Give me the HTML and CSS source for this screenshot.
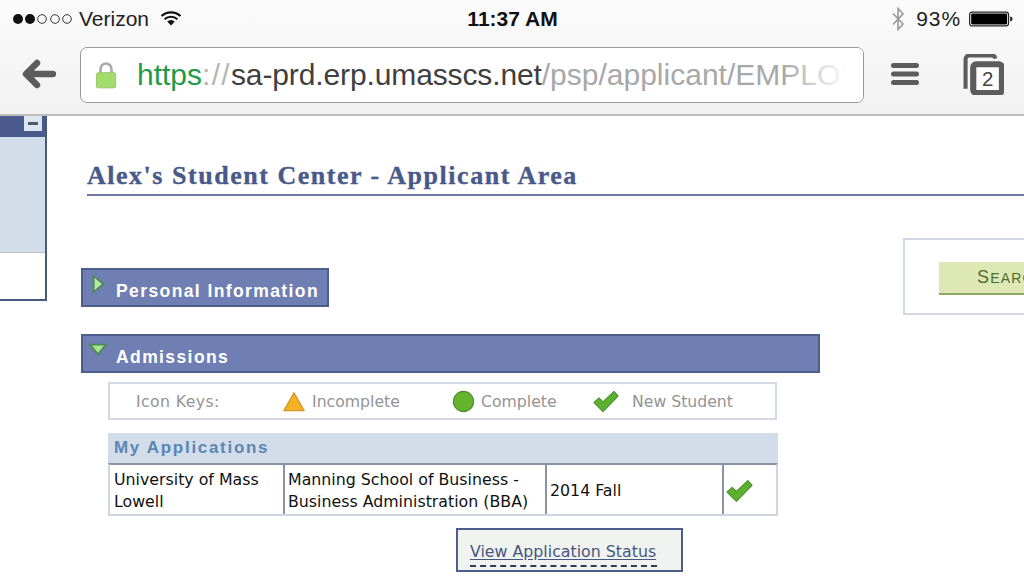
FILE: index.html
```html
<!DOCTYPE html>
<html lang="en">
<head>
<meta charset="utf-8">
<title>Alex's Student Center</title>
<link rel="stylesheet" href="styles.css">
</head>
<body>
<div class="page">
  <header class="chrome">
    <div class="status">
      <div class="status-left">
        <svg class="signal" viewBox="0 0 62 12"><circle cx="6" cy="6" r="5" fill="#111"/><circle cx="18" cy="6" r="5" fill="#111"/><circle cx="30" cy="6" r="4.3" fill="none" stroke="#333" stroke-width="1"/><circle cx="43" cy="6" r="4.3" fill="none" stroke="#333" stroke-width="1"/><circle cx="55" cy="6" r="4.3" fill="none" stroke="#333" stroke-width="1"/></svg>
        <span class="carrier">Verizon</span>
        <svg class="wifi" viewBox="0 0 22 16"><path d="M1.500 6a14 14 0 0 1 19 0M4.600 9.200a9.600 9.600 0 0 1 12.800 0" fill="none" stroke="#111" stroke-width="2.200"/><path d="M7.200 11.600a5.500 5.500 0 0 1 7.600 0L11 15.600z" fill="#111"/></svg>
      </div>
      <div class="clock">11:37 AM</div>
      <div class="status-right">
        <svg class="bt" viewBox="0 0 14 24"><path d="M2 6.500l10 10.500-5 5.500V1.500l5 5.500L2 17.500" fill="none" stroke="#999" stroke-width="1.600"/></svg>
        <span class="pct">93%</span>
        <svg class="batt" viewBox="0 0 46 16"><rect x=".7" y=".7" width="40.600" height="14.600" rx="2.500" fill="#fff" stroke="#222" stroke-width="1.300"/><rect x="2.300" y="2.300" width="37.500" height="11.400" rx="1.200" fill="#000"/><path d="M43 5.500c1.800.4 2.500 1.300 2.500 2.500s-.7 2.100-2.500 2.500z" fill="#222"/></svg>
      </div>
    </div>
    <div class="nav">
      <svg class="back" viewBox="0 0 34 30"><path d="M15 4 4 15l11 11M5 15h26" fill="none" stroke="#5c5c5c" stroke-width="6.500" stroke-linecap="round" stroke-linejoin="round"/></svg>
      <div class="url">
        <svg class="lock" viewBox="0 0 24 30"><path d="M6 14V8.500a6 6 0 0 1 12 0V14" fill="none" stroke="#a9a9a9" stroke-width="2.800"/><rect x="1.500" y="12.500" width="21" height="16.500" rx="2" class="lock-body"/></svg>
        <span class="url-text"><span class="u-green">https</span><span class="u-grey">://</span><span class="u-dark">sa-prd.erp.umasscs.net</span><span class="u-light">/psp/applicant/EMPLOY</span></span>
      </div>
      <svg class="menu" viewBox="0 0 28 24"><path d="M2.500 3.500h23M2.500 12h23M2.500 20.500h23" fill="none" stroke="#5c5c5c" stroke-width="5" stroke-linecap="round"/></svg>
      <svg class="tabs" viewBox="0 0 40 40"><path d="M2.500 34V5a3.500 3.500 0 0 1 3.500-3.500h22a3.500 3.500 0 0 1 3.500 3" fill="none" stroke="#5c5c5c" stroke-width="4"/><rect x="10" y="10" width="28" height="28" rx="3" fill="#fff" stroke="#5c5c5c" stroke-width="6"/><text x="24" y="31" class="tabs-num">2</text></svg>
    </div>
  </header>

  <main class="content">
    <aside class="side">
      <div class="side-head"><span class="side-btn"></span></div>
      <div class="side-pale"></div>
      <div class="side-white"></div>
    </aside>
    <div class="main">
      <h1 class="title">Alex's Student Center - Applicant Area</h1>
      <div class="lower">
        <div class="left">
          <div class="bar bar-short">
            <svg class="arrow-r" viewBox="0 0 12 18"><path d="M1.500 1.500 10.500 9l-9 7.500z" fill="#b4e8a0" stroke="#4e8a5a" stroke-width="1.800"/></svg>
            <span class="bar-label">Personal Information</span>
          </div>
          <div class="bar bar-long">
            <svg class="arrow-d" viewBox="0 0 18 12"><path d="M1.500 1.500h15L9 10.500z" fill="#a5e38f" stroke="#4e8a5a" stroke-width="1.800"/></svg>
            <span class="bar-label">Admissions</span>
          </div>
          <div class="indent">
            <div class="keys">
              <span class="key-title">Icon Keys:</span>
              <span class="key key-inc">
                <svg class="i-tri" viewBox="0 0 24 22"><path d="M12 1.500 23 21H1z" fill="#f5b324" stroke="#d8962a" stroke-width="1.500" stroke-linejoin="round"/></svg>Incomplete</span>
              <span class="key key-com">
                <svg class="i-circ" viewBox="0 0 24 24"><circle cx="12" cy="12" r="10.500" fill="#66b32e" stroke="#4b8f2a" stroke-width="1.200"/></svg>Complete</span>
              <span class="key key-new">
                <svg class="i-check" viewBox="0 0 26 22"><path d="M1 12l5-4.500 4 4L21 1l4 4.500L10 21z" fill="#5fb030" stroke="#4a9a30" stroke-width="1.200" stroke-linejoin="round"/></svg>New Student</span>
            </div>
            <div class="apps-head">My Applications</div>
            <div class="apps-row">
              <div class="cell cell-a">University of Mass<br>Lowell</div>
              <div class="cell cell-b">Manning School of Business -<br>Business Administration (BBA)</div>
              <div class="cell cell-c">2014 Fall</div>
              <div class="cell cell-d"><svg class="i-check" viewBox="0 0 26 22"><path d="M1 12l5-4.500 4 4L21 1l4 4.500L10 21z" fill="#5fb030" stroke="#4a9a30" stroke-width="1.200" stroke-linejoin="round"/></svg></div>
            </div>
            <div class="status-btn-row"><a class="status-btn" href="#">View Application Status</a></div>
          </div>
        </div>
        <div class="panel"><div class="search-btn"><span class="sc-big">S</span>EARCH</div></div>
      </div>
    </div>
  </main>
</div>
</body>
</html>
```
FILE: styles.css
```css
* { box-sizing: border-box; }
html, body { margin: 0; padding: 0; background: #fff; }
.page { width: 1024px; height: 576px; overflow: hidden; font-family: "Liberation Sans", Arial, sans-serif; }

.chrome { height: 116px; background: linear-gradient(#fbfbfb, #f1f1f1); border-bottom: 2px solid #bdbdbd; }
.status { height: 38px; display: grid; grid-template-columns: 1fr auto 1fr; align-items: center; padding: 0 11px 0 12px; color: #222; font-size: 21px; }
.status-left { display: flex; align-items: center; }
.signal { width: 62px; height: 12px; margin-right: 5px; flex: none; }
.carrier { margin-right: 11px; }
.wifi { width: 22px; height: 16px; flex: none; margin-top: -3px; }
.clock { font-weight: 700; color: #111; font-size: 21px; }
.status-right { display: flex; align-items: center; justify-content: flex-end; }
.bt { width: 14px; height: 24px; margin-right: 11px; flex: none; }
.pct { margin-right: 8px; letter-spacing: .9px; }
.batt { width: 44px; height: 16px; flex: none; }

.nav { display: flex; align-items: center; height: 76px; padding: 0 19px 0 22px; margin-top: -2px; }
.back { width: 34px; height: 30px; flex: none; margin-right: 24px; }
.url { position: relative; width: 784px; height: 56px; margin-top: 1px; flex: none; display: flex; align-items: center; background: #fff; border: 1px solid #9b9b9b; border-radius: 7px; padding-left: 14px; overflow: hidden; margin-right: 27px; }
.url::after { content: ""; position: absolute; right: 0; top: 0; bottom: 0; width: 80px; background: linear-gradient(to right, rgba(255,255,255,0), #fff 80%); }
.lock { width: 22px; height: 28px; flex: none; margin-right: 20px; }
.lock-body { fill: #a3db6c; stroke: #8fc45c; stroke-width: 1; }
.url-text { font-size: 30px; white-space: nowrap; }
.u-green { color: #1f9a4a; }
.u-grey { color: #b5b5b5; letter-spacing: 1.300px; }
.u-dark { color: #3f3f3f; letter-spacing: -.12px; }
.u-light { color: #a8a8a8; }
.menu { width: 28px; height: 24px; flex: none; margin-right: 44px; }
.tabs { width: 41px; height: 41px; flex: none; }
.tabs-num { font: 400 20px "Liberation Sans", sans-serif; fill: #444; text-anchor: middle; }

.content { display: flex; height: 460px; background: #fff; }
.side { width: 47px; height: 185px; flex: none; display: flex; flex-direction: column; border-right: 2px solid #46597f; border-bottom: 2px solid #46597f; margin-right: 34px; }
.side-head { height: 21px; background: #4a5a8c; display: flex; justify-content: flex-end; padding-right: 3px; }
.side-btn { width: 18px; height: 15px; background: #dfe5f0; display: flex; align-items: center; justify-content: center; }
.side-btn::before { content: ""; width: 10px; height: 3px; background: #4a5a72; }
.side-pale { height: 116px; background: #d3dce9; border-bottom: 1px solid #b8bcc4; }
.side-white { flex: 1; background: #fff; }

.main { flex: 1; min-width: 0; display: flex; flex-direction: column; }
.title { margin: 44px 0 0 6px; height: 36px; border-bottom: 2px solid #6e78a8; font: 700 26px/32px "Liberation Serif", serif; letter-spacing: 1.520px; -webkit-text-stroke: .35px #48598a; color: #48598a; white-space: nowrap; }
.lower { display: flex; margin-top: 42px; }
.left { width: 739px; flex: none; padding-top: 30px; margin-right: 83px; }
.bar { display: flex; align-items: flex-start; background: #6f7fb3; border: 2px solid #4d5d8c; color: #fff; height: 39px; }
.bar-short { width: 248px; }
.bar-long { width: 739px; margin-top: 27px; }
.bar-label { font-weight: 700; font-size: 17.500px; letter-spacing: 1.400px; line-height: 20px; margin-top: 11px; white-space: nowrap; }
.arrow-r { width: 13px; height: 20px; flex: none; margin: 4px 11px 0 9px; }
.arrow-d { width: 20px; height: 13px; flex: none; margin: 7px 8px 0 5px; }

.indent { margin-left: 27px; width: 670px; font-family: "DejaVu Sans", Verdana, sans-serif; }
.keys { display: flex; align-items: center; width: 669px; height: 38px; margin-top: 9px; border: 2px solid #d3dae6; background: #fff; color: #949494; font-size: 15.700px; padding-left: 26px; }
.key { display: flex; align-items: center; white-space: nowrap; }
.key-title { width: 147px; flex: none; letter-spacing: .4px; }
.key-inc { width: 169px; flex: none; }
.key-com { width: 141px; flex: none; }
.i-tri { width: 22px; height: 21px; margin-right: 7px; flex: none; }
.i-circ { width: 23px; height: 23px; margin-right: 6px; flex: none; }
.key .i-check { width: 26px; height: 23px; margin-right: 13px; flex: none; }
.apps-head { height: 30px; margin-top: 13px; background: #d3dce9; color: #5a86b4; font-weight: 700; font-size: 17px; letter-spacing: 1.700px; line-height: 29px; padding-left: 6px; font-family: "Liberation Sans", sans-serif; }
.apps-row { display: flex; height: 53px; border: 2px solid #cfd6e0; border-top: 2px solid #8a93a3; font-size: 15.800px; line-height: 22px; color: #111; }
.cell { display: flex; align-items: center; padding: 2px 0 0 4px; white-space: nowrap; border-right: 2px solid #8a93a3; }
.cell-a { width: 175px; }
.cell-b { width: 262px; padding-left: 3px; }
.cell-c { width: 177px; padding-left: 3px; }
.cell-d { flex: 1; border-right: 0; padding-left: 2px; }
.cell-d .i-check { width: 27px; height: 24px; }
.status-btn-row { display: flex; padding-left: 348px; margin-top: 12px; }
.status-btn { display: block; width: 227px; height: 44px; border: 2px solid #4d5d8c; background: #f1f3f1; color: #46577f; font-size: 15.800px; padding: 12px 0 0 12px; white-space: nowrap; text-decoration: underline; text-underline-offset: 2px; position: relative; }
.status-btn::after { content: ""; position: absolute; left: 12px; top: 35px; width: 187px; border-top: 2px dashed #333a55; }

.panel { flex: none; width: 200px; height: 77px; border: 2px solid #d3d8e6; padding: 22px 0 0 34px; background: #fff; }
.search-btn { width: 150px; height: 33px; background: #dde8b4; border-bottom: 2px solid #8fa860; color: #4d6d33; font-size: 14px; letter-spacing: 1.200px; line-height: 30px; padding-left: 38px; white-space: nowrap; }
.sc-big { font-size: 18px; }
```
